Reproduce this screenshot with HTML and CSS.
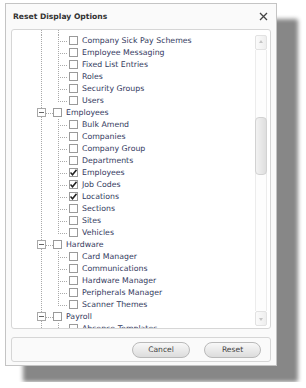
FILE: index.html
```html
<!DOCTYPE html>
<html lang="en">
  <head>
    <meta charset="UTF-8" />
    <meta name="viewport" content="width=device-width, initial-scale=1.0" />
    <title>Reset Display Options</title>
    <link rel="stylesheet" href="styles.css">
  </head>
  <body>
    <div class="stage">
      <div class="shadow"></div>
      <div class="dialog">
        <div class="title-bar">
          <span class="title">Reset Display Options</span>
          <svg class="close" width="9" height="9" viewBox="0 0 9 9">
            <path d="M1 1 L8 8 M8 1 L1 8" stroke="#444" stroke-width="1.3" fill="none" />
          </svg>
        </div>

        <div class="tree-panel">
          <div class="tree">
            <div class="spacer"><span class="cell l0"></span><span class="cell l1"></span></div>

            <div class="row"><span class="cell l0"></span><span class="cell tee"></span><span class="box"></span><span class="label">Company Sick Pay Schemes</span></div>
            <div class="row"><span class="cell l0"></span><span class="cell tee"></span><span class="box"></span><span class="label">Employee Messaging</span></div>
            <div class="row"><span class="cell l0"></span><span class="cell tee"></span><span class="box"></span><span class="label">Fixed List Entries</span></div>
            <div class="row"><span class="cell l0"></span><span class="cell tee"></span><span class="box"></span><span class="label">Roles</span></div>
            <div class="row"><span class="cell l0"></span><span class="cell tee"></span><span class="box"></span><span class="label">Security Groups</span></div>
            <div class="row"><span class="cell l0"></span><span class="cell end"></span><span class="box"></span><span class="label">Users</span></div>

            <div class="row"><span class="cell parent"><span class="toggle"></span></span><span class="box"></span><span class="label">Employees</span></div>
            <div class="row"><span class="cell l0"></span><span class="cell tee"></span><span class="box"></span><span class="label">Bulk Amend</span></div>
            <div class="row"><span class="cell l0"></span><span class="cell tee"></span><span class="box"></span><span class="label">Companies</span></div>
            <div class="row"><span class="cell l0"></span><span class="cell tee"></span><span class="box"></span><span class="label">Company Group</span></div>
            <div class="row"><span class="cell l0"></span><span class="cell tee"></span><span class="box"></span><span class="label">Departments</span></div>
            <div class="row"><span class="cell l0"></span><span class="cell tee"></span><span class="box"><svg width="7" height="7" viewBox="0 0 7 7"><path d="M0.5 3.5 L2.5 5.8 L6.5 0.8" stroke="#222" stroke-width="1.5" fill="none" /></svg></span><span class="label">Employees</span></div>
            <div class="row"><span class="cell l0"></span><span class="cell tee"></span><span class="box"><svg width="7" height="7" viewBox="0 0 7 7"><path d="M0.5 3.5 L2.5 5.8 L6.5 0.8" stroke="#222" stroke-width="1.5" fill="none" /></svg></span><span class="label">Job Codes</span></div>
            <div class="row"><span class="cell l0"></span><span class="cell tee"></span><span class="box"><svg width="7" height="7" viewBox="0 0 7 7"><path d="M0.5 3.5 L2.5 5.8 L6.5 0.8" stroke="#222" stroke-width="1.5" fill="none" /></svg></span><span class="label">Locations</span></div>
            <div class="row"><span class="cell l0"></span><span class="cell tee"></span><span class="box"></span><span class="label">Sections</span></div>
            <div class="row"><span class="cell l0"></span><span class="cell tee"></span><span class="box"></span><span class="label">Sites</span></div>
            <div class="row"><span class="cell l0"></span><span class="cell end"></span><span class="box"></span><span class="label">Vehicles</span></div>

            <div class="row"><span class="cell parent"><span class="toggle"></span></span><span class="box"></span><span class="label">Hardware</span></div>
            <div class="row"><span class="cell l0"></span><span class="cell tee"></span><span class="box"></span><span class="label">Card Manager</span></div>
            <div class="row"><span class="cell l0"></span><span class="cell tee"></span><span class="box"></span><span class="label">Communications</span></div>
            <div class="row"><span class="cell l0"></span><span class="cell tee"></span><span class="box"></span><span class="label">Hardware Manager</span></div>
            <div class="row"><span class="cell l0"></span><span class="cell tee"></span><span class="box"></span><span class="label">Peripherals Manager</span></div>
            <div class="row"><span class="cell l0"></span><span class="cell end"></span><span class="box"></span><span class="label">Scanner Themes</span></div>

            <div class="row"><span class="cell parent"><span class="toggle"></span></span><span class="box"></span><span class="label">Payroll</span></div>
            <div class="row"><span class="cell l0"></span><span class="cell tee"></span><span class="box"></span><span class="label">Absence Templates</span></div>
          </div>

          <div class="scrollbar">
            <div class="arrow up"></div>
            <div class="track">
              <div class="thumb"></div>
            </div>
            <div class="arrow down"></div>
          </div>
        </div>

        <div class="footer">
          <button class="btn cancel">Cancel</button>
          <button class="btn reset">Reset</button>
        </div>
      </div>
    </div>
  </body>
</html>
```

FILE: styles.css
```css
* {
  box-sizing: border-box;
  margin: 0;
  padding: 0;
}

body {
  background: #fff;
  font-family: "DejaVu Sans", Verdana, sans-serif;
}

/* dialog and its drop shadow share one grid cell */
.stage {
  display: grid;
  width: 306px;
  padding: 3px 0 0 5px;
}

.shadow,
.dialog {
  grid-area: 1 / 1;
}

.shadow {
  width: 275px;
  height: 363px;
  margin: 16px 0 0 18px;
  background: #878787;
  border-radius: 2px;
  filter: blur(2px);
}

.dialog {
  position: relative;
  width: 272px;
  height: 363px;
  border: 1px solid #c4c4c4;
  background: #fafafa;
  padding: 0 5px 3px;
  display: flex;
  flex-direction: column;
}

.title-bar {
  height: 25px;
  display: flex;
  align-items: center;
  justify-content: space-between;
  padding: 0 3px 0 2px;
}

.title {
  font-size: 7.6px;
  font-weight: bold;
  color: #333;
}

.close {
  display: block;
}

.tree-panel {
  height: 301px;
  border: 1px solid #d6d6d6;
  border-radius: 3px;
  background: #fff;
  display: flex;
  overflow: hidden;
}

.tree {
  flex: 1;
  overflow: hidden;
  font-size: 7.8px;
  color: #343a5e;
}

.spacer,
.row {
  display: flex;
  padding-left: 21px;
}

.spacer {
  height: 5px;
}

.row {
  height: 12px;
  align-items: center;
  white-space: nowrap;
}

.cell {
  align-self: stretch;
  flex: none;
  background-repeat: no-repeat;
}

/* dotted connector lines */
.l0 {
  width: 16px;
  background-image: repeating-linear-gradient(to bottom, #a9a9a9 0 1px, transparent 1px 2px);
  background-size: 1px 100%;
  background-position: 8px 0;
}

.l1 {
  width: 20px;
  background-image: repeating-linear-gradient(to bottom, #a9a9a9 0 1px, transparent 1px 2px);
  background-size: 1px 100%;
  background-position: 9px 0;
}

.tee,
.end {
  width: 20px;
  background-image:
    repeating-linear-gradient(to bottom, #a9a9a9 0 1px, transparent 1px 2px),
    repeating-linear-gradient(to right, #a9a9a9 0 1px, transparent 1px 2px);
  background-size: 1px 100%, 9px 1px;
  background-position: 9px 0, 9px 6px;
}

.end {
  background-size: 1px 7px, 9px 1px;
}

.parent {
  width: 20px;
  display: flex;
  align-items: center;
  background-image:
    repeating-linear-gradient(to bottom, #a9a9a9 0 1px, transparent 1px 2px),
    repeating-linear-gradient(to right, #a9a9a9 0 1px, transparent 1px 2px);
  background-size: 1px 100%, 7px 1px;
  background-position: 8px 0, 13px 6px;
}

.toggle {
  width: 9px;
  height: 9px;
  margin-left: 4px;
  border: 1px solid #a8a8a8;
  background: #fff;
  display: flex;
  align-items: center;
  justify-content: center;
}

.toggle::before {
  content: "";
  width: 5px;
  height: 1px;
  background: #666;
}

.box {
  width: 9px;
  height: 9px;
  flex: none;
  margin-right: 4px;
  border: 1px solid #9a9a9a;
  background: #fff;
  display: flex;
  align-items: center;
  justify-content: center;
}

.box svg {
  display: block;
}

.scrollbar {
  width: 12px;
  margin: 5px 3px 2px 0;
  display: flex;
  flex-direction: column;
}

.arrow {
  height: 15px;
  border: 1px solid #e2e2e2;
  border-radius: 2px;
  background: linear-gradient(to right, #fbfbfb, #eeeeee);
  display: flex;
  justify-content: center;
}

.arrow::before {
  content: "";
  margin-top: 4px;
  border-left: 2px solid transparent;
  border-right: 2px solid transparent;
  border-bottom: 3px solid #c4c4c4;
  height: 0;
}

.arrow.down {
  align-items: flex-end;
}

.arrow.down::before {
  margin: 0 0 4px;
  border-bottom: none;
  border-top: 3px solid #c4c4c4;
}

.track {
  flex: 1;
  border-left: 1px solid #ececec;
  border-right: 1px solid #ececec;
  background: #fdfdfd;
  padding-top: 67px;
}

.thumb {
  height: 58px;
  margin: 0 -1px;
  border: 1px solid #d2d2d2;
  border-radius: 4px;
  background: linear-gradient(to right, #f2f2f2, #dedede);
}

.footer {
  height: 25px;
  margin-top: 8px;
  border: 1px solid #d6d6d6;
  border-radius: 3px;
  background: #fafafa;
  display: flex;
  align-items: center;
  justify-content: flex-end;
  gap: 14px;
  padding-right: 9px;
}

.btn {
  height: 16px;
  border: 1px solid #b9b9b9;
  border-radius: 8px;
  background: linear-gradient(to bottom, #f8f8f8, #dcdcdc);
  font-family: "DejaVu Sans", Verdana, sans-serif;
  font-size: 7.6px;
  color: #444;
  cursor: pointer;
}

.cancel {
  width: 58px;
}

.reset {
  width: 57px;
}
```
